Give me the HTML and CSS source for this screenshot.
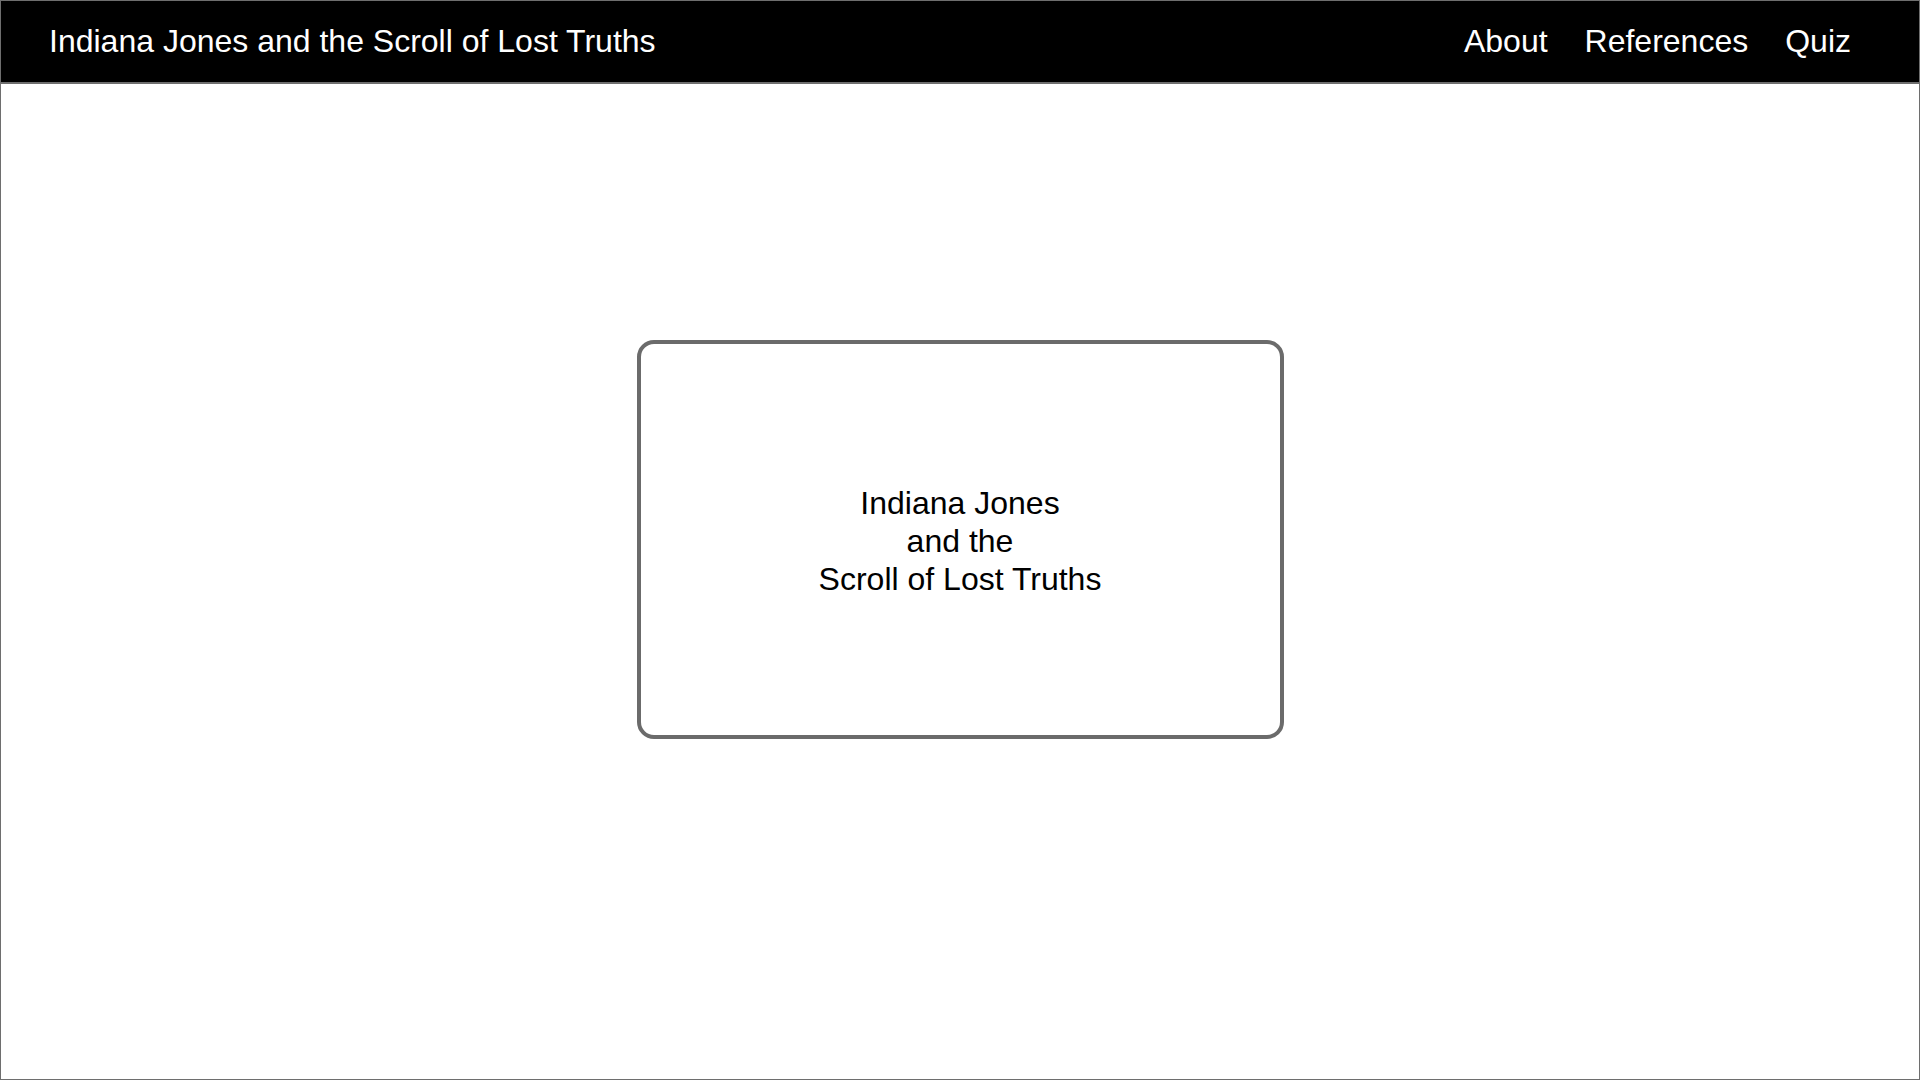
FILE: index.html
```html
<!DOCTYPE html>
<html lang="en">
<head>
<meta charset="utf-8">
<title>Indiana Jones and the Scroll of Lost Truths</title>
<link rel="stylesheet" href="styles.css">
</head>
<body>
<div class="frame">
  <header class="topbar">
    <div class="site-title">Indiana Jones and the Scroll of Lost Truths</div>
    <nav class="nav">
      <a class="nav-link" href="#">About</a>
      <a class="nav-link" href="#">References</a>
      <a class="nav-link" href="#">Quiz</a>
    </nav>
  </header>
  <main class="stage">
    <div class="card">
      <p class="card-title">Indiana Jones<br>and the<br>Scroll of Lost Truths</p>
    </div>
  </main>
</div>
</body>
</html>
```

FILE: styles.css
```css
* { box-sizing: border-box; }
html, body {
  margin: 0;
  padding: 0;
  height: 100%;
}
body {
  background: #ffffff;
  font-family: "Liberation Sans", Arial, Helvetica, sans-serif;
  color: #000000;
}
.frame {
  width: 1920px;
  height: 1080px;
  border: 1px solid #6e6e6e;
  display: flex;
  flex-direction: column;
  background: #ffffff;
}
.topbar {
  height: 83px;
  flex: none;
  background: #000000;
  border-bottom: 2px solid #6e6e6e;
  display: flex;
  align-items: center;
  justify-content: space-between;
  padding: 0 68px 0 48px;
  color: #ffffff;
  font-size: 32px;
}
.site-title {
  white-space: nowrap;
}
.nav {
  display: flex;
  gap: 37px;
}
.nav-link {
  color: #ffffff;
  text-decoration: none;
  font-size: 32px;
}
.stage {
  flex: 1;
  display: flex;
  align-items: center;
  justify-content: center;
  padding-bottom: 84px;
  background: #ffffff;
}
.card {
  width: 647px;
  height: 399px;
  border: 4px solid #6b6b6b;
  border-radius: 17px;
  background: #ffffff;
  display: flex;
  align-items: center;
  justify-content: center;
  padding-top: 3px;
}
.card-title {
  margin: 0;
  text-align: center;
  font-size: 32px;
  line-height: 38px;
  color: #000000;
}
```
